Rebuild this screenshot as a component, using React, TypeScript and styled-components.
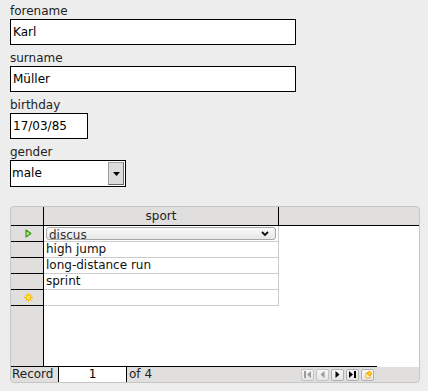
import React from "react";
import styled, { createGlobalStyle } from "styled-components";

const GlobalStyle = createGlobalStyle`
  body {
    margin: 0;
    background: #ededed;
    font-family: "DejaVu Sans", "Liberation Sans", sans-serif;
    font-size: 12px;
    color: #1a1a1a;
  }
`;

const sports = ["high jump", "long-distance run", "sprint"];

function App() {
  return (
    <Page>
      <GlobalStyle />
      <Field>
        <Label>forename</Label>
        <TextBox $width={286}>Karl</TextBox>
      </Field>
      <Field>
        <Label>surname</Label>
        <TextBox $width={286}>Müller</TextBox>
      </Field>
      <Field>
        <Label>birthday</Label>
        <TextBox $width={78}>17/03/85</TextBox>
      </Field>
      <Field>
        <Label>gender</Label>
        <Select>
          <SelectText>male</SelectText>
          <DropButton>
            <svg width="7" height="4" viewBox="0 0 7 4">
              <path d="M0 0h7L3.5 4z" fill="#000" />
            </svg>
          </DropButton>
        </Select>
      </Field>

      <Grid>
        <HeaderRow>
          <Corner />
          <ColumnHeader>sport</ColumnHeader>
          <HeaderFiller />
        </HeaderRow>
        <Body>
          <RowHeaders>
            <RowHeader>
              <svg width="7" height="9" viewBox="0 0 7 9">
                <path d="M1 1v7l5-3.5z" fill="#b6e08a" stroke="#3a9a10" strokeWidth="1.2" strokeLinejoin="round" />
              </svg>
            </RowHeader>
            {sports.map((s) => (
              <RowHeader key={s} />
            ))}
            <RowHeader>
              <svg width="9" height="9" viewBox="0 0 9 9">
                <g stroke="#f3b400" strokeWidth="1">
                  <path d="M4.5 0v9M0 4.5h9M1.3 1.3l6.4 6.4M7.7 1.3l-6.4 6.4" />
                </g>
                <circle cx="4.5" cy="4.5" r="2.4" fill="#ffe24a" stroke="#f3b400" strokeWidth="0.8" />
              </svg>
            </RowHeader>
            <RowHeaderRest />
          </RowHeaders>
          <DataArea>
            <DataCell>
              <Combo>
                <ComboText>discus</ComboText>
                <svg width="8" height="5" viewBox="0 0 8 5">
                  <path d="M1 1l3 3 3-3" fill="none" stroke="#111" strokeWidth="1.8" />
                </svg>
              </Combo>
            </DataCell>
            {sports.map((s) => (
              <DataCell key={s}>{s}</DataCell>
            ))}
            <DataCell />
          </DataArea>
        </Body>
        <NavBar>
          <NavMain>
            <RecordLabel>Record</RecordLabel>
            <RecordInput>1</RecordInput>
            <RecordCount>of 4</RecordCount>
            <NavButtons>
              <NavButton $disabled>
                <svg width="7" height="7" viewBox="0 0 7 7">
                  <path d="M0.5 0v7M1.5 0v7" stroke="#9a9a9a" />
                  <path d="M7 0v7L3 3.5z" fill="#9a9a9a" />
                </svg>
              </NavButton>
              <NavButton $disabled>
                <svg width="5" height="7" viewBox="0 0 5 7">
                  <path d="M4.5 0v7L0.5 3.5z" fill="#9a9a9a" />
                </svg>
              </NavButton>
              <NavButton>
                <svg width="5" height="7" viewBox="0 0 5 7">
                  <path d="M0.5 0v7L4.5 3.5z" fill="#000" />
                </svg>
              </NavButton>
              <NavButton>
                <svg width="7" height="7" viewBox="0 0 7 7">
                  <path d="M0 0v7L4 3.5z" fill="#000" />
                  <path d="M5.5 0v7M6.5 0v7" stroke="#000" />
                </svg>
              </NavButton>
              <NavButton>
                <svg width="8" height="8" viewBox="0 0 8 8">
                  <path d="M2 2h4v5H2z" fill="#fff6c8" stroke="#e8a800" strokeWidth="0.8" />
                  <circle cx="5.5" cy="2.5" r="2" fill="#ffd21a" stroke="#f08a00" strokeWidth="0.7" />
                </svg>
              </NavButton>
            </NavButtons>
          </NavMain>
          <NavRest />
        </NavBar>
      </Grid>
    </Page>
  );
}

export default App;

const Page = styled.div`
  padding: 4px 0 0 10px;
`;

const Field = styled.div`
  display: flex;
  flex-direction: column;
  align-items: flex-start;
  & + & {
    margin-top: 6px;
  }
`;

const Label = styled.div`
  height: 15px;
  line-height: 15px;
  color: #222;
`;

const TextBox = styled.div<{ $width: number }>`
  box-sizing: border-box;
  width: ${({ $width }) => $width}px;
  height: 26px;
  border: 1px solid #000;
  background: #fff;
  color: #000;
  padding-left: 2px;
  line-height: 24px;
`;

const Select = styled.div`
  box-sizing: border-box;
  width: 116px;
  height: 27px;
  border: 1px solid #000;
  background: #fff;
  display: flex;
  align-items: stretch;
  color: #000;
`;

const SelectText = styled.div`
  flex: 1;
  padding-left: 1px;
  line-height: 25px;
`;

const DropButton = styled.div`
  width: 14px;
  margin: 1px 1px 1px 0;
  background: #dcdcdc;
  border: 1px solid #a0a0a0;
  border-right-color: #6a6a6a;
  border-bottom-color: #6a6a6a;
  display: flex;
  align-items: center;
  justify-content: center;
`;

const Grid = styled.div`
  margin-top: 19px;
  width: 410px;
  height: 177px;
  box-sizing: border-box;
  border: 1px solid #c6c6c6;
  border-radius: 4px;
  background: #e0dfdd;
  display: flex;
  flex-direction: column;
  overflow: hidden;
`;

const HeaderRow = styled.div`
  display: flex;
  height: 18px;
  border-bottom: 1px solid #000;
`;

const Corner = styled.div`
  width: 32px;
  border-right: 1px solid #000;
`;

const ColumnHeader = styled.div`
  width: 234px;
  border-right: 1px solid #000;
  text-align: center;
  line-height: 18px;
  color: #222;
`;

const HeaderFiller = styled.div`
  flex: 1;
`;

const Body = styled.div`
  display: flex;
  height: 140px;
`;

const RowHeaders = styled.div`
  width: 32px;
  border-right: 1px solid #000;
  display: flex;
  flex-direction: column;
`;

const RowHeader = styled.div`
  height: 15px;
  border-bottom: 1px solid #000;
  display: flex;
  align-items: center;
  justify-content: center;
  padding-left: 2px;
`;

const RowHeaderRest = styled.div`
  flex: 1;
`;

const DataArea = styled.div`
  flex: 1;
  background: #fff;
  display: flex;
  flex-direction: column;
`;

const DataCell = styled.div`
  box-sizing: content-box;
  width: 232px;
  height: 15px;
  padding-left: 2px;
  border-right: 1px solid #cccccc;
  border-bottom: 1px solid #cccccc;
  line-height: 15px;
  color: #111;
  white-space: nowrap;
`;

const Combo = styled.div`
  box-sizing: border-box;
  width: 230px;
  height: 13px;
  margin-top: 1px;
  border: 1px solid #a8a8a8;
  border-radius: 3px;
  background: linear-gradient(#fbfbfb, #e6e6e6);
  display: flex;
  align-items: center;
  justify-content: space-between;
  padding: 0 6px 0 2px;
  overflow: hidden;
`;

const ComboText = styled.span`
  line-height: 11px;
  padding-top: 4px;
  color: #333;
`;

const NavBar = styled.div`
  display: flex;
  height: 16px;
`;

const NavMain = styled.div`
  width: 366px;
  border-top: 1px solid #000;
  display: flex;
  align-items: stretch;
`;

const NavRest = styled.div`
  flex: 1;
  background: #fff;
  height: 1px;
`;

const RecordLabel = styled.div`
  width: 46px;
  padding-left: 1px;
  line-height: 15px;
  color: #222;
`;

const RecordInput = styled.div`
  width: 67px;
  background: #fff;
  border-left: 1px solid #000;
  border-right: 1px solid #000;
  text-align: center;
  line-height: 15px;
  color: #000;
`;

const RecordCount = styled.div`
  padding-left: 2px;
  line-height: 15px;
  color: #222;
  flex: 1;
`;

const NavButtons = styled.div`
  display: flex;
  align-items: center;
  gap: 2px;
  padding-right: 3px;
`;

const NavButton = styled.div<{ $disabled?: boolean }>`
  box-sizing: border-box;
  width: 13px;
  height: 12px;
  border: 1px solid ${({ $disabled }) => ($disabled ? "#c4c4c4" : "#b0b0b0")};
  border-radius: 2px;
  background: linear-gradient(#f8f8f8, #e4e4e4);
  display: flex;
  align-items: center;
  justify-content: center;
`;
